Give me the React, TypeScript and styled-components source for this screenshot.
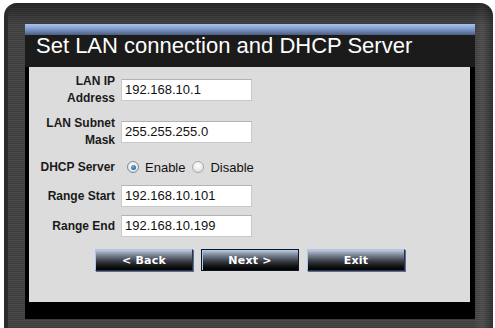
import styled, { createGlobalStyle } from 'styled-components';

const GlobalStyle = createGlobalStyle`
  html, body {
    margin: 0;
    padding: 0;
    background: #ffffff;
    overflow: hidden;
  }
  body {
    font-family: 'Liberation Sans', Arial, sans-serif;
  }
`;

const FIELDS = [
  { label: ['LAN IP', 'Address'], value: '192.168.10.1' },
  { label: ['LAN Subnet', 'Mask'], value: '255.255.255.0' },
];

const RANGE = [
  { label: 'Range Start', value: '192.168.10.101' },
  { label: 'Range End', value: '192.168.10.199' },
];

const App = () => {
  return (
    <>
      <GlobalStyle />
      <Frame>
        <Panel>
          <BlueBar />
          <Title>Set LAN connection and DHCP Server</Title>
          <Content>
            <Form>
              {FIELDS.map((field, index) => (
                <Row key={`field-${index}`} $height={34}>
                  <Label>
                    {field.label[0]}
                    <br />
                    {field.label[1]}
                  </Label>
                  <Input>{field.value}</Input>
                </Row>
              ))}
              <Row $height={20}>
                <Label>DHCP Server</Label>
                <RadioGroup>
                  <RadioOption>
                    <Radio $checked />
                    Enable
                  </RadioOption>
                  <RadioOption>
                    <Radio />
                    Disable
                  </RadioOption>
                </RadioGroup>
              </Row>
              {RANGE.map((field, index) => (
                <Row key={`range-${index}`} $height={22}>
                  <Label>{field.label}</Label>
                  <Input>{field.value}</Input>
                </Row>
              ))}
            </Form>
            <Buttons>
              <Button>&lt; Back</Button>
              <Button $focused>Next &gt;</Button>
              <Button>Exit</Button>
            </Buttons>
          </Content>
          <Footer />
        </Panel>
      </Frame>
    </>
  );
};

export default App;

const Frame = styled.div`
  box-sizing: border-box;
  margin: 3px 0 0 4px;
  width: 489px;
  height: 325px;
  padding: 21px 18px 9px 17px;
  border-left: 4px solid #2b2b2b;
  border-radius: 13px 13px 0 0;
  background:
    linear-gradient(to bottom, rgba(0, 0, 0, 0.45), rgba(0, 0, 0, 0) 22px),
    linear-gradient(to right, rgba(255, 255, 255, 0) 466px, rgba(255, 255, 255, 0.06) 474px, rgba(0, 0, 0, 0.25) 485px),
    repeating-linear-gradient(to bottom, #3c3c3c 0 1px, #4b4b4b 1px 2px);
`;

const Panel = styled.div`
  display: flex;
  flex-direction: column;
  width: 450px;
  height: 295px;
  background: #000000;
`;

const BlueBar = styled.div`
  height: 11px;
  background: linear-gradient(to bottom, #a9c4ee 0%, #7f9ccd 45%, #4d5d7e 100%);
`;

const Title = styled.div`
  height: 32px;
  padding-left: 11px;
  background: #1b1b1b;
  color: #ffffff;
  font-family: 'Liberation Sans', Arial, sans-serif;
  font-size: 22px;
  line-height: 22px;
  white-space: nowrap;
`;

const Content = styled.div`
  height: 235px;
  margin: 0 5px 0 4px;
  padding-top: 6px;
  box-sizing: border-box;
  background: #dcdcdc;
`;

const Form = styled.div`
  display: flex;
  flex-direction: column;
  gap: 8px;
`;

const Row = styled.div<{ $height: number }>`
  display: grid;
  grid-template-columns: 86px auto;
  column-gap: 6px;
  align-items: center;
  height: ${(p) => p.$height}px;
`;

const Label = styled.div`
  text-align: right;
  font-family: 'Liberation Sans', Arial, sans-serif;
  font-size: 12px;
  font-weight: 700;
  line-height: 17px;
  color: #1a1a1a;
`;

const Input = styled.div`
  box-sizing: border-box;
  width: 131px;
  height: 22px;
  padding-left: 3px;
  background: #ffffff;
  border: 1px solid #c9c9c9;
  border-top-color: #b3b3b3;
  font-family: 'Liberation Sans', Arial, sans-serif;
  font-size: 13px;
  line-height: 20px;
  color: #111111;
`;

const RadioGroup = styled.div`
  display: flex;
  align-items: center;
  gap: 7px;
  padding-left: 6px;
  font-family: 'Liberation Sans', Arial, sans-serif;
  font-size: 13px;
  color: #111111;
`;

const RadioOption = styled.div`
  display: flex;
  align-items: center;
  gap: 6px;
`;

const Radio = styled.span<{ $checked?: boolean }>`
  position: relative;
  box-sizing: border-box;
  width: 12px;
  height: 12px;
  border-radius: 50%;
  border: 1px solid ${(p) => (p.$checked ? '#7a8a9a' : '#a8a8a8')};
  background: radial-gradient(circle at 50% 35%, #ffffff 0%, #e9e9e9 60%, #cfcfcf 100%);

  &::after {
    content: '';
    display: ${(p) => (p.$checked ? 'block' : 'none')};
    position: absolute;
    left: 2.5px;
    top: 2.5px;
    width: 5px;
    height: 5px;
    border-radius: 50%;
    background: radial-gradient(circle at 40% 35%, #6fb2e6 0%, #1f5f9c 80%, #173f6a 100%);
  }
`;

const Buttons = styled.div`
  display: flex;
  gap: 8px;
  margin-top: 12px;
  padding-left: 66px;
`;

const Button = styled.div<{ $focused?: boolean }>`
  box-sizing: border-box;
  width: 98px;
  height: 22px;
  display: flex;
  align-items: center;
  justify-content: center;
  border: 1px solid;
  border-color: ${(p) =>
    p.$focused
      ? '#0c1426 #0c1426 #0c1426 #0c1426'
      : '#a9c8ee #2a3550 #2a3550 #a9c8ee'};
  box-shadow: ${(p) =>
    p.$focused ? 'inset 1px 1px 0 #a9c8ee' : '1px 1px 0 #5c6b86'};
  background: linear-gradient(
    to bottom,
    #c0cbdc 0%,
    #7c8597 25%,
    #3b3f49 55%,
    #141414 80%,
    #000000 100%
  );
  color: #ffffff;
  font-family: 'DejaVu Sans', Verdana, sans-serif;
  font-size: 11px;
  font-weight: 700;
  letter-spacing: 0.2px;
`;

const Footer = styled.div`
  flex: 1;
  background: #000000;
`;
